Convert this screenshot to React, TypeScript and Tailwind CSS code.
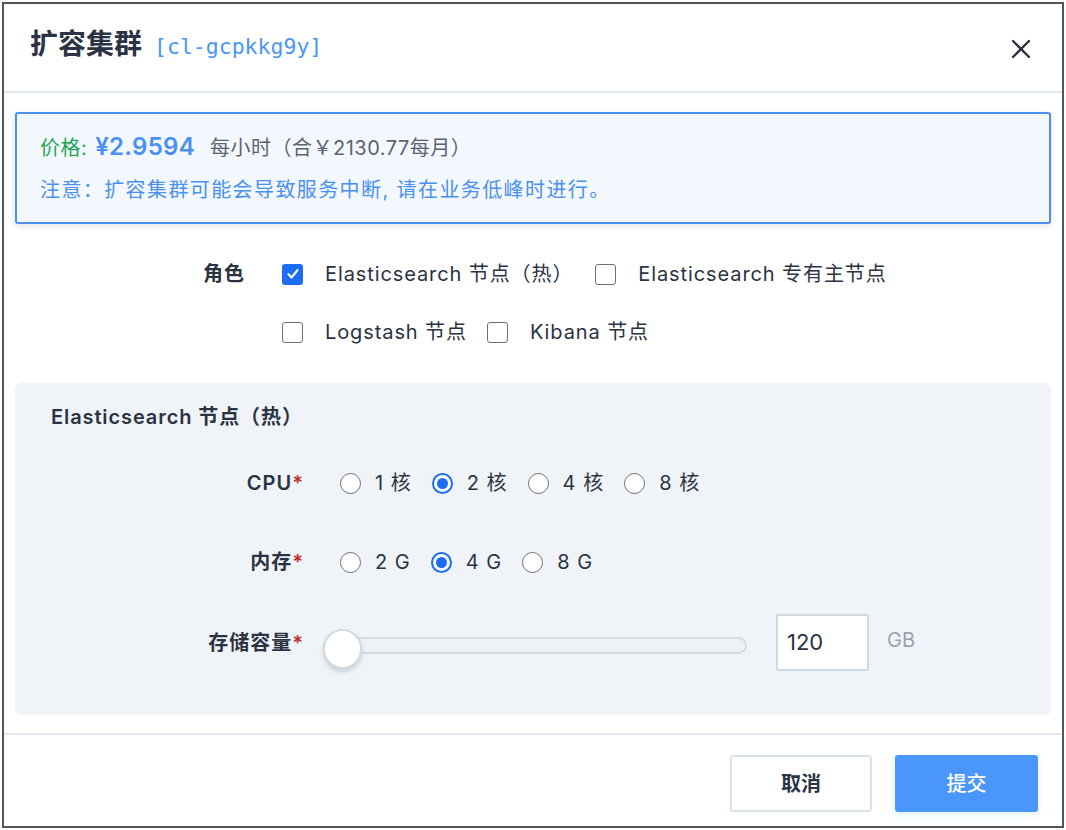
import React from "react";

const font = { fontFamily: '"Inter", "Noto Sans CJK SC", sans-serif' };

function Checkbox({ checked }: { checked?: boolean }) {
  return checked ? (
    <span className="flex h-[21px] w-[21px] shrink-0 items-center justify-center rounded-[3px] bg-[#1b6cf2]">
      <svg width="14" height="14" viewBox="0 0 14 14" fill="none">
        <path d="M2.5 7.2 L5.6 10.4 L11.5 3.2" stroke="white" strokeWidth="2.2" strokeLinecap="round" strokeLinejoin="round" />
      </svg>
    </span>
  ) : (
    <span className="h-[21px] w-[21px] shrink-0 rounded-[3px] border-[1.5px] border-[#6c7075] bg-white" />
  );
}

function Radio({ checked }: { checked?: boolean }) {
  return checked ? (
    <span className="flex h-[21px] w-[21px] items-center justify-center rounded-full border-2 border-[#1b6cf2] bg-white">
      <span className="h-[11px] w-[11px] rounded-full bg-[#1b6cf2]" />
    </span>
  ) : (
    <span className="h-[21px] w-[21px] rounded-full border-[1.5px] border-[#6c7075] bg-white" />
  );
}

function RadioGroup({ options, value }: { options: string[]; value: string }) {
  return (
    <div className="flex items-center gap-[20px]">
      {options.map((o) => (
        <label key={o} className="flex items-center gap-[14px] text-[20px] leading-[28px] tracking-[1px] text-[#2b3343]">
          <Radio checked={o === value} />
          <span>{o}</span>
        </label>
      ))}
    </div>
  );
}

function Row({ label, children, className = "" }: { label: string; children: React.ReactNode; className?: string }) {
  return (
    <div className={`flex items-center ${className}`}>
      <div className="w-[289px] text-right text-[20px] leading-[28px] font-semibold tracking-[1px] text-[#2b3343]">
        {label}
        <span className="text-[#c22a2a]">*</span>
      </div>
      {children}
    </div>
  );
}

function Option({ checked, label }: { checked?: boolean; label: string }) {
  return (
    <label className="flex items-center gap-[22px] text-[20px] leading-[28px] tracking-[0.9px] text-[#2b3343]">
      <Checkbox checked={checked} />
      <span>{label}</span>
    </label>
  );
}

export default function App() {
  return (
    <div className="h-[830px] w-[1066px] bg-white p-[2px]" style={font}>
      <div className="flex h-full flex-col border-2 border-[#50555e] bg-white">
        <div className="flex h-[89px] shrink-0 items-center justify-between border-b-2 border-[#e1e8ef] pl-[26px] pr-[30px]">
          <div className="flex items-baseline gap-[12px] pb-[8px]">
            <span className="text-[28px] font-semibold text-[#2b3343]">扩容集群</span>
            <span className="text-[21.5px] text-[#4a96f5]" style={{ fontFamily: '"DejaVu Sans Mono", monospace' }}>
              [cl-gcpkkg9y]
            </span>
          </div>
          <svg width="22" height="22" viewBox="0 0 22 22" className="mt-[2px]">
            <path d="M3 3 L19 19 M19 3 L3 19" stroke="#2b3343" strokeWidth="2.4" strokeLinecap="round" />
          </svg>
        </div>

        <div className="mx-[11px] mt-[19px] flex h-[112px] shrink-0 flex-col justify-center gap-[14px] rounded-[3px] border-2 border-[#4a90f0] bg-[#f3f8ff] pl-[23px] shadow-[0_2px_6px_rgba(0,0,0,0.12)]">
          <div className="flex items-baseline leading-[28px]">
            <span className="text-[20px] tracking-[0.5px] text-[#22a552]">价格:</span>
            <span className="ml-[8px] text-[24px] font-semibold tracking-[0.3px] text-[#4a90f0]">¥2.9594</span>
            <span className="ml-[15px] text-[20px] tracking-[0.5px] text-[#5b6270]">每小时（合￥2130.77每月）</span>
          </div>
          <div className="text-[20px] leading-[28px] tracking-[1.4px] text-[#4a90f0]">
            注意：扩容集群可能会导致服务中断, 请在业务低峰时进行。
          </div>
        </div>

        <div className="mt-[35px] flex">
          <div className="flex h-[30px] w-[241px] items-center justify-end text-[20px] font-semibold tracking-[1px] text-[#2b3343]">角色</div>
          <div className="ml-[37px] flex flex-col gap-[28px]">
            <div className="flex h-[30px] items-center gap-[22px]">
              <Option checked label="Elasticsearch 节点（热）" />
              <Option label="Elasticsearch 专有主节点" />
            </div>
            <div className="flex h-[30px] items-center gap-[20px]">
              <Option label="Logstash 节点" />
              <Option label="Kibana 节点" />
            </div>
          </div>
        </div>

        <div className="mx-[11px] mt-[36px] h-[332px] shrink-0 rounded-[6px] bg-[#f0f4f9] pt-[20px]">
          <div className="pl-[36px] text-[20px] leading-[28px] font-semibold tracking-[0.9px] text-[#2b3343]">
            Elasticsearch 节点（热）
          </div>
          <Row label="CPU" className="mt-[37px] h-[30px]">
            <div className="ml-[36px]">
              <RadioGroup options={["1 核", "2 核", "4 核", "8 核"]} value="2 核" />
            </div>
          </Row>
          <Row label="内存" className="mt-[49px] h-[30px]">
            <div className="ml-[36px]">
              <RadioGroup options={["2 G", "4 G", "8 G"]} value="4 G" />
            </div>
          </Row>
          <Row label="存储容量" className="mt-[37px] h-[57px]">
            <div className="ml-[19px] flex items-center">
              <div className="relative flex h-[40px] w-[424px] items-center">
                <div className="mt-[6px] h-[17px] w-full rounded-full border-2 border-[#d3dbe5] bg-[#eef2f7]" />
                <div className="absolute left-0 top-[6px] h-[40px] w-[39px] rounded-full border-2 border-[#d0dadf] bg-white shadow-[0_3px_4px_rgba(120,150,160,0.35)]" />
              </div>
              <div className="ml-[29px] flex h-[57px] w-[93px] items-center rounded-[2px] border-2 border-[#cfd8e3] bg-white pl-[9px] text-[22px] text-[#2b3343]">
                120
              </div>
              <span className="ml-[18px] -mt-[6px] text-[20px] text-[#9aa3ad]">GB</span>
            </div>
          </Row>
        </div>

        <div className="mt-[18px] border-t-2 border-[#e1e8ef]" />
        <div className="flex justify-end gap-[23px] pr-[24px] pt-[20px]">
          <button className="h-[57px] w-[142px] rounded-[3px] border-2 border-[#dbe2ea] bg-white text-[20px] font-semibold text-[#2b3343]">
            取消
          </button>
          <button className="h-[57px] w-[143px] rounded-[3px] bg-[#4a96fa] text-[20px] font-medium text-white shadow-[0_3px_6px_rgba(80,200,150,0.18)]">
            提交
          </button>
        </div>
      </div>
    </div>
  );
}
